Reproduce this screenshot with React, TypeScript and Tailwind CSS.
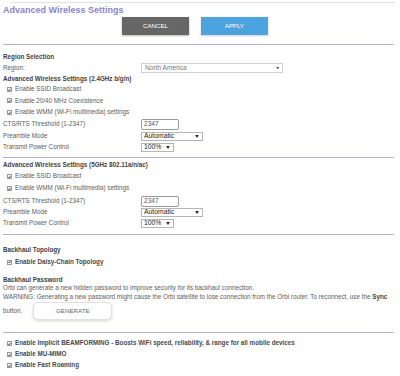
import React from "react";

const Check = () => (
  <span className="flex h-[5px] w-[5px] shrink-0 items-center justify-center border border-[#9a9a9a] bg-[#eeeeee]">
    <svg viewBox="0 0 10 10" className="h-[6px] w-[6px]">
      <path d="M1.2 5 L4 8 L9 1.5" fill="none" stroke="#222" strokeWidth="2.4" />
    </svg>
  </span>
);

const Arrow = () => (
  <svg viewBox="0 0 6 5" className="h-[3px] w-[4px]">
    <path d="M0 0 H6 L3 5 Z" fill="#222" />
  </svg>
);

function CheckRow({ h, label, bold }: { h: string; label: string; bold?: boolean }) {
  return (
    <div className={`flex items-center gap-[3px] pl-[4px] ${h}`}>
      <Check />
      <span className={bold ? "font-bold text-[#4a4a4a]" : "text-[#5c5c5c]"}>{label}</span>
    </div>
  );
}

function Heading({ h, children }: { h: string; children: React.ReactNode }) {
  return <div className={`flex items-center font-bold text-[#3f3f3f] ${h}`}>{children}</div>;
}

function FieldRow({ h, label, children }: { h: string; label: string; children: React.ReactNode }) {
  return (
    <div className={`flex items-center ${h}`}>
      <span className="w-[138px] shrink-0 text-[#5c5c5c]">{label}</span>
      {children}
    </div>
  );
}

const ThresholdInput = () => (
  <div className="flex h-[11px] w-[38px] items-center rounded-[2px] border border-[#9a9a9a] pl-[2px] text-[6.6px] text-[#555]">
    2347
  </div>
);

const Select = ({ w, value }: { w: string; value: string }) => (
  <div className={`flex h-[9px] items-center justify-between border border-[#b5b5b5] pl-[2px] pr-[3px] text-[6.8px] text-[#222] ${w}`}>
    <span>{value}</span>
    <Arrow />
  </div>
);

function WirelessBlock({ title, coexist, rows }: { title: string; coexist: boolean; rows: string[] }) {
  return (
    <>
      <Heading h={rows[0]}>{title}</Heading>
      <CheckRow h={rows[1]} label="Enable SSID Broadcast" />
      {coexist && <CheckRow h={rows[2]} label="Enable 20/40 MHz Coexistence" />}
      <CheckRow h={rows[3]} label="Enable WMM (Wi-Fi multimedia) settings" />
      <FieldRow h={rows[4]} label="CTS/RTS Threshold (1-2347)">
        <ThresholdInput />
      </FieldRow>
      <FieldRow h={rows[5]} label="Preamble Mode">
        <Select w="w-[62px]" value="Automatic" />
      </FieldRow>
      <FieldRow h={rows[6]} label="Transmit Power Control">
        <Select w="w-[33px]" value="100%" />
      </FieldRow>
    </>
  );
}

const Rule = ({ m }: { m: string }) => <div className={`h-px w-[391px] bg-[#b3aedb] ${m}`} />;

export default function App() {
  return (
    <div className="h-[376px] w-[400px] overflow-hidden bg-white font-['Liberation_Sans',Arial,sans-serif] text-[6.3px] leading-none">
      <div className="ml-[10px] mr-[5px] h-[3px] border-b border-[#e3e3e3]" />
      <div className="pl-[3px]">
        <div className="mt-[1px] flex h-[13px] items-center text-[9px] font-bold text-[#8a84cf]">
          Advanced Wireless Settings
        </div>
        <div className="flex h-[18px] gap-[12px] pl-[119px]">
          <button className="w-[67px] bg-[#666666] text-[6.2px] text-white shadow-[0_1px_2px_rgba(0,0,0,0.3)]">
            CANCEL
          </button>
          <button className="w-[67px] bg-[#4ba3e0] text-[6.2px] text-white shadow-[0_1px_2px_rgba(0,0,0,0.2)]">
            APPLY
          </button>
        </div>
        <Rule m="mt-[9px]" />

        <Heading h="mt-[6px] h-[11.5px]">Region Selection</Heading>
        <FieldRow h="h-[11px]" label="Region:">
          <div className="flex h-[9.5px] w-[142px] items-center justify-between border border-[#cfcfcf] pl-[3px] pr-[3px] text-[6.6px] text-[#777]">
            <span>North America</span>
            <svg viewBox="0 0 6 5" className="h-[2.5px] w-[3.5px]">
              <path d="M0 0 H6 L3 5 Z" fill="#555" />
            </svg>
          </div>
        </FieldRow>
        <WirelessBlock
          title="Advanced Wireless Settings (2.4GHz b/g/n)"
          coexist
          rows={["h-[10.5px]", "h-[11px]", "h-[11.5px]", "h-[12px]", "h-[12px]", "h-[11.5px]", "h-[10px]"]}
        />
        <Rule m="mt-[5px]" />

        <WirelessBlock
          title="Advanced Wireless Settings (5GHz 802.11a/n/ac)"
          coexist={false}
          rows={["mt-[2px] h-[11px]", "h-[11px]", "", "h-[13px]", "h-[12px]", "h-[11px]", "h-[11px]"]}
        />
        <Rule m="mt-[5px]" />

        <Heading h="mt-[10px] h-[11px]">Backhaul Topology</Heading>
        <CheckRow h="h-[12px]" label="Enable Daisy-Chain Topology" bold />
        <Heading h="mt-[7px] h-[9.5px]">Backhaul Password</Heading>
        <div className="flex h-[8px] items-center text-[#5c5c5c]">
          Orbi can generate a new hidden password to improve security for its backhaul connection.
        </div>
        <div className="flex h-[9.5px] items-center whitespace-nowrap text-[#5c5c5c]">
          WARNING: Generating a new password might cause the Orbi satellite to lose connection from the Orbi router. To reconnect, use the&nbsp;
          <b className="text-[#3f3f3f]">Sync</b>
        </div>
        <div className="flex h-[18px] items-center gap-[11px] text-[#5c5c5c]">
          <span>button.</span>
          <button className="h-[18px] w-[79px] rounded-[5px] border border-[#e2e2e2] bg-white text-[6.2px] text-[#666] shadow-[0_1px_3px_rgba(0,0,0,0.18)]">
            GENERATE
          </button>
        </div>
        <Rule m="mt-[12px]" />

        <CheckRow
          h="mt-[5px] h-[11px]"
          label="Enable Implicit BEAMFORMING - Boosts WiFi speed, reliability, & range for all mobile devices"
          bold
        />
        <CheckRow h="h-[11px]" label="Enable MU-MIMO" bold />
        <CheckRow h="h-[11px]" label="Enable Fast Roaming" bold />
      </div>
    </div>
  );
}
